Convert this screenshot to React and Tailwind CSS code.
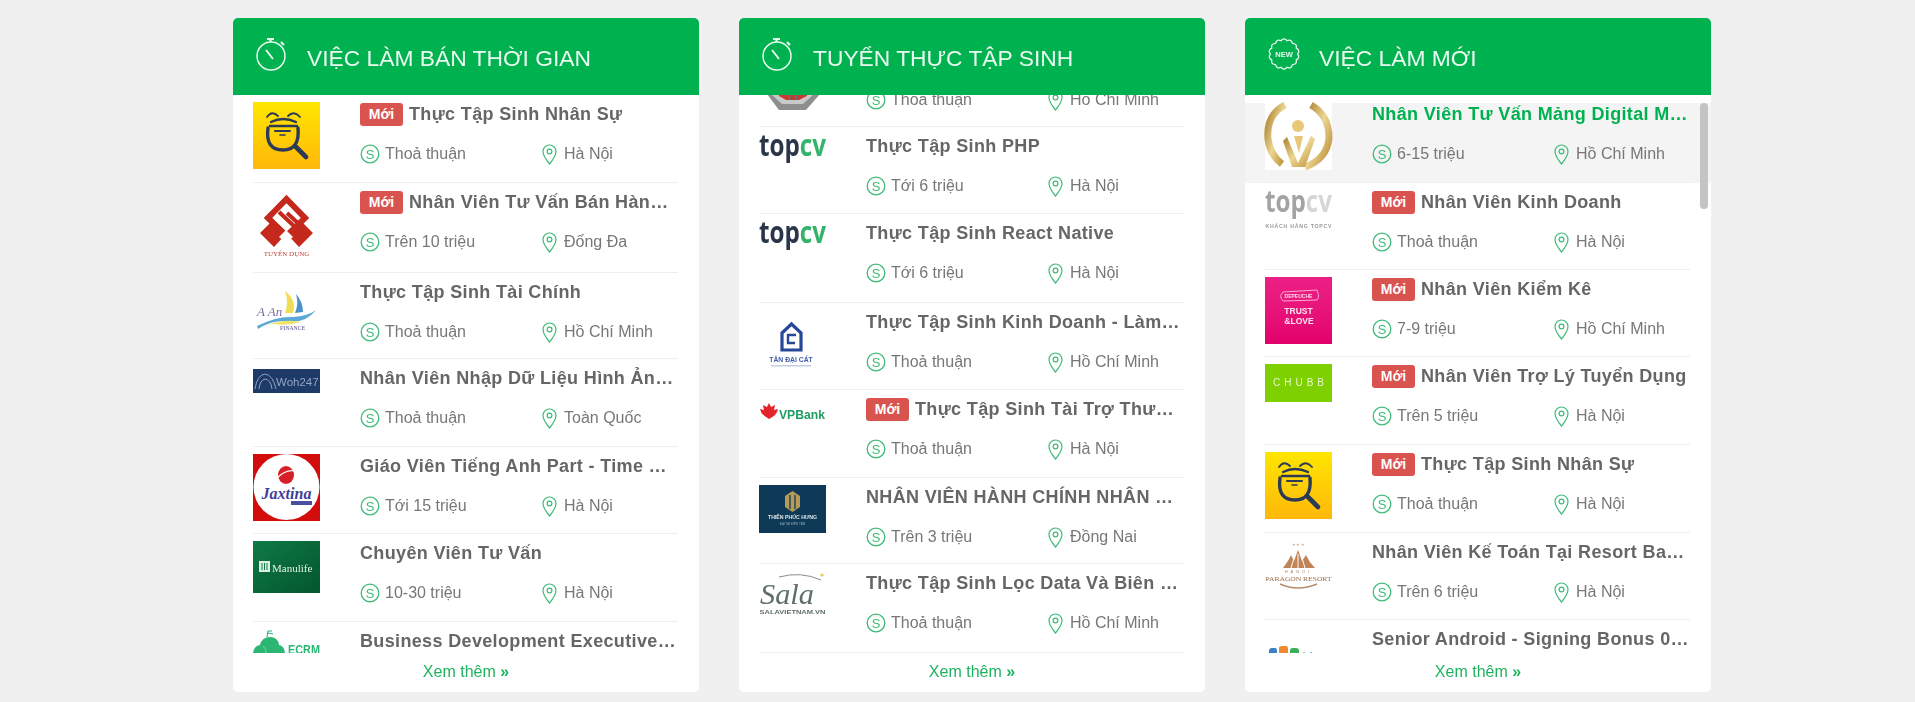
import React from "react";

const NAVY = "#2b3a55";

function Svg({ children, h = 67 }) {
  return (
    <svg width="67" height={h} viewBox={`0 0 67 ${h}`} className="block overflow-visible" style={{ fontFamily: "'Liberation Sans', sans-serif" }}>
      {children}
    </svg>
  );
}

function Bee() {
  return (
    <Svg>
      <defs>
        <linearGradient id="beeg" x1="0" y1="0" x2="0" y2="1">
          <stop offset="0" stopColor="#ffe600" />
          <stop offset="1" stopColor="#ffb70a" />
        </linearGradient>
      </defs>
      <rect width="67" height="67" fill="url(#beeg)" />
      <g fill="none" stroke={NAVY} strokeLinecap="round">
        <path d="M14 15 Q19 8 25 14" strokeWidth="1.8" />
        <path d="M47 15 Q41 8 35 14" strokeWidth="1.8" />
        <path d="M18 20 Q30 14 43 20" strokeWidth="2.4" />
        <path d="M17 24 H44" strokeWidth="2.4" />
        <path d="M22 29 H37" strokeWidth="2" />
        <path d="M27 33 H32" strokeWidth="1.6" />
        <path d="M15 26 Q12 48 30 48 Q47 48 45 26" strokeWidth="3.4" />
        <path d="M43 45 L53 55" strokeWidth="4.6" />
      </g>
    </Svg>
  );
}

function TuyenDung() {
  return (
    <Svg>
      <g fill="none" stroke="#c5281c" strokeWidth="6">
        <path d="M33.5 9 L52 28 L33.5 46 L15 28 Z" />
        <path d="M26 22 L42 37 M24 36 L33 45 M34 23 L47 35" strokeWidth="4" />
      </g>
      <path d="M7 43 L20 30 L33 44 L21 57 Z M60 43 L47 30 L34 44 L46 57 Z" fill="#c5281c" />
      <path d="M26 47 L33 40 L40 47 L33 53 Z" fill="#fff" />
      <text x="33.5" y="66" fontSize="7" textAnchor="middle" fill="#b8433c" fontFamily="'Liberation Serif', serif">TUYỂN DỤNG</text>
    </Svg>
  );
}

function AAn() {
  return (
    <Svg>
      <path d="M32 11 Q44 20 40 33 L32 33 Q36 22 32 11Z" fill="#f0dc55" />
      <path d="M43 14 Q50 22 50 32 L42 33 Q46 24 43 14Z" fill="#4a92c9" />
      <path d="M4 46 Q24 36 40 37 Q55 36 63 30 Q52 44 34 41 Q18 40 5 49Z" fill="#5aa8d8" />
      <path d="M12 46 Q30 38 48 42 Q36 46 20 44Z" fill="#efe26a" />
      <text x="4" y="36" fontSize="13" fontStyle="italic" fill="#7d6aa5" fontFamily="'Liberation Serif', serif">A An</text>
      <text x="27" y="50" fontSize="5.5" fontWeight="700" fill="#7f7aa6" fontFamily="'Liberation Serif', serif">FINANCE</text>
    </Svg>
  );
}

function Woh() {
  return (
    <div className="w-[67px] h-[24px] mt-[3px] bg-[#1d3a68] flex items-center overflow-hidden">
      <Svg h={24}>
        <path d="M2 20 Q4 6 12 5 Q20 6 23 20" fill="none" stroke="#8fa3c2" strokeWidth="1" />
        <path d="M6 20 Q7 11 12 10 Q18 11 19 20" fill="none" stroke="#8fa3c2" strokeWidth="1" />
        <text x="23" y="16.5" fontSize="11.5" fill="#93a6c4">Woh247</text>
      </Svg>
    </div>
  );
}

function Jaxtina() {
  return (
    <Svg>
      <rect width="67" height="67" fill="#d30d0d" />
      <circle cx="33.5" cy="33" r="33" fill="#fff" />
      <path d="M0 58 Q12 66 33 66 Q54 66 67 58 V67 H0Z" fill="#d30d0d" />
      <ellipse cx="33" cy="21" rx="8" ry="9" fill="#d61f26" />
      <path d="M24 24 Q33 15 42 17" stroke="#fff" strokeWidth="1.2" fill="none" />
      <text x="33.5" y="45" fontSize="16" fontWeight="700" fontStyle="italic" textAnchor="middle" fill="#3c3f98" fontFamily="'Liberation Serif', serif">Jaxtina</text>
      <rect x="38" y="47" width="21" height="4" fill="#4a4fa3" />
    </Svg>
  );
}

function Manulife() {
  return (
    <div className="w-[67px] h-[52px] bg-gradient-to-br from-[#0d7a45] to-[#05562f] flex items-center overflow-hidden">
      <Svg h={52}>
        <rect x="6" y="20" width="11" height="11" fill="#dfeee4" />
        <path d="M9 22 V29 M11.5 22 V29 M14 22 V29" stroke="#0d7a45" strokeWidth="1" />
        <text x="19" y="31" fontSize="11" fill="#e6f2ea" fontFamily="'Liberation Serif', serif">Manulife</text>
      </Svg>
    </div>
  );
}

function Ecrm() {
  return (
    <Svg>
      <path d="M0 26 Q0 17 7 16 Q9 8 17 8 Q25 8 26 16 Q32 17 32 26 Z" fill="#2bb673" />
      <path d="M14 8 L15 2 M15 2 L19 2 M15 4 L20 5" stroke="#2bb673" strokeWidth="1.2" fill="none" />
      <path d="M10 17 Q14 20 13 25" stroke="#8fdcb5" strokeWidth="0.8" fill="none" />
      <text x="35" y="24.5" fontSize="13" fontWeight="700" fill="#2bb673" textLength="32" lengthAdjust="spacingAndGlyphs">ECRM</text>
    </Svg>
  );
}

function Seal() {
  return (
    <Svg>
      <path d="M20 0 H47 L61 16 V46 L47 62 H20 L8 46 V16 Z" fill="#8e8e8e" />
      <path d="M15 6 H52 L55 46 L44 56 H23 L12 46 Z" fill="#c9c9c9" />
      <path d="M18 28 H50 L48 48 L40 52 H27 L20 48 Z" fill="#c73a32" />
      <path d="M31 28 V52 M37 28 V52" stroke="#6a6a6a" strokeWidth="2" />
    </Svg>
  );
}

function TopCv({ gray }) {
  return (
    <Svg>
      <text x="0" y="22" fontSize="30" fontWeight="700" textLength="67" lengthAdjust="spacingAndGlyphs" style={{ fontFamily: "'Open Sans', sans-serif" }}>
        <tspan fill={gray ? "#a3a3a3" : "#2a3648"}>top</tspan>
        <tspan fill={gray ? "#d6d6d6" : "#34b36b"}>cv</tspan>
      </text>
      {gray && (
        <text x="33.5" y="38" fontSize="5.2" fontWeight="700" textAnchor="middle" fill="#9a9a9a" textLength="66" lengthAdjust="spacing">KHÁCH HÀNG TOPCV</text>
      )}
    </Svg>
  );
}

function TanDaiCat() {
  return (
    <Svg>
      <path d="M32.5 14 L42 23 V40 H23 V23 Z" fill="none" stroke="#27479b" strokeWidth="3.2" />
      <path d="M36 33 H29 V25 H37" fill="none" stroke="#27479b" strokeWidth="2.4" />
      <text x="32" y="52" fontSize="6.8" fontWeight="700" textAnchor="middle" fill="#3d5ba8">TÂN ĐẠI CÁT</text>
      <rect x="12" y="55" width="40" height="1.5" fill="#c5cde0" />
    </Svg>
  );
}

function VPBank() {
  return (
    <Svg>
      <path d="M10 22 Q2 18 1 12 L5 13 L4 8 L8 10 L10 6 L12 10 L16 8 L15 13 L19 12 Q18 18 10 22Z" fill="#e3242b" />
      <text x="20" y="22" fontSize="13.5" fontWeight="700" fill="#1e9c62" textLength="46" lengthAdjust="spacingAndGlyphs">VPBank</text>
    </Svg>
  );
}

function ThienPhuc() {
  return (
    <div className="w-[67px] h-[48px] bg-[#0e3a57]">
      <Svg h={48}>
        <path d="M33.5 6 L41 11 V22 L33.5 27 L26 22 V11 Z" fill="#b79a55" />
        <path d="M31 10 V24 M36 10 V24" stroke="#0e3a57" strokeWidth="1.3" />
        <text x="33.5" y="34" fontSize="5.2" fontWeight="700" textAnchor="middle" fill="#dfe5e6">THIÊN PHÚC HƯNG</text>
        <text x="33.5" y="40" fontSize="3" textAnchor="middle" fill="#94a7b3">ĐẠI TÀI ĐIỀN TÂM</text>
      </Svg>
    </div>
  );
}

function Sala() {
  return (
    <Svg>
      <path d="M20 6 Q42 0 62 9" fill="none" stroke="#8a8a8a" strokeWidth="1" />
      <circle cx="63" cy="4" r="1.6" fill="#e9c65a" />
      <text x="1" y="33" fontSize="30" fontStyle="italic" fill="#5d6f68" textLength="54" lengthAdjust="spacingAndGlyphs" fontFamily="'Liberation Serif', serif">Sala</text>
      <text x="33.5" y="43" fontSize="5.4" fontWeight="700" textAnchor="middle" fill="#5f6d68" textLength="66" lengthAdjust="spacingAndGlyphs">SALAVIETNAM.VN</text>
    </Svg>
  );
}

function Gold() {
  return (
    <div className="bg-white w-[67px] h-[67px]">
      <Svg>
        <defs>
          <linearGradient id="goldg" x1="0" y1="0" x2="1" y2="1">
            <stop offset="0" stopColor="#a87c2c" />
            <stop offset=".5" stopColor="#ecd792" />
            <stop offset="1" stopColor="#b98b35" />
          </linearGradient>
        </defs>
        <path d="M20 2 Q1 12 3 36 Q5 52 17 61" fill="none" stroke="url(#goldg)" strokeWidth="7" />
        <path d="M46 2 Q64 12 64 35 Q62 56 40 64" fill="none" stroke="url(#goldg)" strokeWidth="7" />
        <circle cx="33" cy="23" r="6" fill="#e8c878" />
        <path d="M22 34 L33 60 L46 33 L50 36 L40 64 H27 L18 38 Z" fill="url(#goldg)" />
        <path d="M29 33 H38 L34 50 Z" fill="#e8c878" />
      </Svg>
    </div>
  );
}

function Trust() {
  return (
    <div className="w-[67px] h-[67px] bg-gradient-to-b from-[#ed1f85] to-[#e2006c]">
      <Svg>
        <path d="M16 21 Q14 19 18 15 L52 13 Q55 20 52 23 L18 24 Z" fill="none" stroke="#f7a8cf" strokeWidth="1" />
        <text x="33.5" y="21" fontSize="5" textAnchor="middle" fontWeight="700" fill="#ffd9ea">DEPEUCHE</text>
        <text x="33.5" y="37" fontSize="8.5" fontWeight="700" textAnchor="middle" fill="#ffe3f0">TRUST</text>
        <text x="34" y="47" fontSize="8.5" fontWeight="700" textAnchor="middle" fill="#ffe3f0">&amp;LOVE</text>
      </Svg>
    </div>
  );
}

function Chubb() {
  return (
    <div className="w-[67px] h-[38px] bg-[#7ed000] flex items-center justify-center">
      <span className="text-[10px] leading-none text-[#e9f7cf] tracking-[4px] pl-[4px] font-['Liberation_Sans',sans-serif]">CHUBB</span>
    </div>
  );
}

function Paragon() {
  return (
    <Svg>
      <path d="M18 28 Q24 20 26 15 L29 21 L33 10 L37 21 L41 15 Q44 22 50 28 Z" fill="#c08457" />
      <path d="M26 28 L29 18 M33 28 V14 M40 28 L37 18" stroke="#fff" strokeWidth="1" />
      <text x="33.5" y="6" fontSize="3.5" textAnchor="middle" fill="#c9a98b">★ ★ ★</text>
      <text x="33.5" y="33" fontSize="4" textAnchor="middle" letterSpacing="3" fill="#a98460">HANOI</text>
      <text x="33.5" y="41" fontSize="7" textAnchor="middle" fill="#9c6c45" textLength="66" lengthAdjust="spacingAndGlyphs" fontFamily="'Liberation Serif', serif">PARAGON RESORT</text>
      <path d="M15 44 Q33 52 52 44" fill="none" stroke="#b68d68" strokeWidth="1.5" />
    </Svg>
  );
}

function Fpt() {
  return (
    <Svg>
      <path d="M4 30 V24 Q4 21 7 21 H10 Q12 21 12 24 V30Z" fill="#3b7fc4" />
      <path d="M14 30 V21 Q14 19 17 19 H21 Q23 19 23 22 V30Z" fill="#ef8a2e" />
      <path d="M25 30 V23 Q25 21 28 21 H31 Q34 21 34 24 V30Z" fill="#3fae5a" />
      <circle cx="39" cy="26" r="1" fill="#6f9bd1" />
      <circle cx="46" cy="26" r="1" fill="#6f9bd1" />
    </Svg>
  );
}

function Dollar() {
  return (
    <svg width="20" height="20" viewBox="0 0 20 20" className="shrink-0">
      <circle cx="10" cy="10" r="8.8" fill="none" stroke="#3fbb78" strokeWidth="1.3" />
      <text x="10" y="14.6" fontSize="13" textAnchor="middle" fill="#3fbb78" style={{ fontFamily: "'Liberation Sans', sans-serif" }}>S</text>
    </svg>
  );
}

function Pin() {
  return (
    <svg width="15" height="21" viewBox="0 0 15 21" className="shrink-0">
      <path d="M7.5 20 Q1 12 1 7.5 A6.5 6.5 0 0 1 14 7.5 Q14 12 7.5 20Z" fill="none" stroke="#3fbb78" strokeWidth="1.2" />
      <circle cx="7.5" cy="7.5" r="2.4" fill="none" stroke="#3fbb78" strokeWidth="1.2" />
    </svg>
  );
}

function Clock() {
  return (
    <svg width="31" height="34" viewBox="0 0 31 34" className="shrink-0" fill="none" stroke="#e4f8ec" strokeWidth="1.5">
      <circle cx="15" cy="19" r="14" />
      <path d="M10 13 L17 22" strokeWidth="2" />
      <path d="M11 2 H18 M14.5 2 V5" strokeWidth="2.2" />
      <path d="M25 5 L28 8" strokeWidth="2.2" />
    </svg>
  );
}

function NewBadge() {
  const n = 14;
  let d = "";
  for (let i = 0; i < n; i++) {
    const a0 = (i / n) * Math.PI * 2;
    const a1 = ((i + 0.5) / n) * Math.PI * 2;
    const a2 = ((i + 1) / n) * Math.PI * 2;
    const p = (a, r) => `${(16 + r * Math.cos(a)).toFixed(2)} ${(16 + r * Math.sin(a)).toFixed(2)}`;
    d += `${i === 0 ? "M" + p(a0, 13.6) : ""} Q${p(a1, 16.8)} ${p(a2, 13.6)} `;
  }
  return (
    <svg width="32" height="32" viewBox="0 0 32 32" className="shrink-0">
      <path d={d + "Z"} fill="none" stroke="#e4f8ec" strokeWidth="1.3" />
      <text x="16" y="19" fontSize="7.5" fontWeight="700" textAnchor="middle" fill="#e4f8ec" style={{ fontFamily: "'Liberation Sans', sans-serif" }}>NEW</text>
    </svg>
  );
}

function Row({ logo, title, isNew, pay, place, h, active, noTitle }) {
  return (
    <div className={`${h} pl-[20px] ${active ? "bg-[#f4f4f4]" : ""} box-border`}>
      <div className={`flex w-[425px] h-full box-border border-b border-[#eeeeee] ${active ? "" : "pt-[7px]"}`}>
        <div className="w-[107px] shrink-0">{logo}</div>
        <div className="w-[318px] min-w-0">
          <div className={`flex items-center h-[24px] gap-[6px] ${active ? "-mt-[1px]" : ""}`}>
            {isNew && (
              <span className="shrink-0 w-[43px] h-[23px] rounded-[3px] bg-[#d9534f] text-white text-[14px] leading-[23px] font-bold text-center">Mới</span>
            )}
            {!noTitle && (
              <span className={`truncate text-[18px] leading-[24px] font-bold tracking-[0.35px] pr-[1px] ${active ? "text-[#00b14f]" : "text-[#666666]"}`}>{title}</span>
            )}
          </div>
          {pay && (
            <div className="flex items-center h-[24px] mt-[16px] text-[16px] text-[#777777]">
              <div className="flex items-center gap-[5px] w-[182px]">
                <Dollar />
                <span>{pay}</span>
              </div>
              <div className="flex items-center gap-[7px]">
                <Pin />
                <span>{place}</span>
              </div>
            </div>
          )}
        </div>
      </div>
    </div>
  );
}

function Card({ icon, title, rows, offset, pad, scrollbar }) {
  return (
    <div className="w-[466px] h-[674px] bg-white rounded-[5px] flex flex-col overflow-hidden relative">
      <div className="h-[77px] shrink-0 bg-[#00b14f] flex items-center pl-[23px] gap-[20px] text-[#eafaf0] text-[22.8px] leading-none">
        <div className="w-[31px] flex justify-center -mt-[6px]">{icon}</div>
        <span className="mt-[4px]">{title}</span>
      </div>
      <div className={`h-[558px] overflow-hidden box-border ${pad || ""}`}>
        <div className={offset || ""}>
          {rows.map((r, i) => (
            <Row key={i} {...r} />
          ))}
        </div>
      </div>
      <div className="flex-1 flex items-center justify-center text-[16px] text-[#1fb35f] -mt-[2px]">
        Xem thêm&nbsp;<span className="text-[16px] leading-none font-bold">»</span>
      </div>
      {scrollbar && <div className="absolute left-[455px] top-[85px] w-[8px] h-[106px] rounded-[4px] bg-[#c4c4c4]" />}
    </div>
  );
}

const col1 = [
  { logo: <Bee />, title: "Thực Tập Sinh Nhân Sự", isNew: true, pay: "Thoả thuận", place: "Hà Nội", h: "h-[88px]" },
  { logo: <TuyenDung />, title: "Nhân Viên Tư Vấn Bán Hàng Online", isNew: true, pay: "Trên 10 triệu", place: "Đống Đa", h: "h-[90px]" },
  { logo: <AAn />, title: "Thực Tập Sinh Tài Chính", pay: "Thoả thuận", place: "Hồ Chí Minh", h: "h-[86px]" },
  { logo: <Woh />, title: "Nhân Viên Nhập Dữ Liệu Hình Ảnh Tại Nhà", pay: "Thoả thuận", place: "Toàn Quốc", h: "h-[88px]" },
  { logo: <Jaxtina />, title: "Giáo Viên Tiếng Anh Part - Time Tại Hà Nội", pay: "Tới 15 triệu", place: "Hà Nội", h: "h-[87px]" },
  { logo: <Manulife />, title: "Chuyên Viên Tư Vấn", pay: "10-30 triệu", place: "Hà Nội", h: "h-[88px]" },
  { logo: <Ecrm />, title: "Business Development Executive Part Time", h: "h-[88px]" },
];

const col2 = [
  { logo: <Seal />, noTitle: true, pay: "Thoả thuận", place: "Hồ Chí Minh", h: "h-[86px]" },
  { logo: <TopCv />, title: "Thực Tập Sinh PHP", pay: "Tới 6 triệu", place: "Hà Nội", h: "h-[87px]" },
  { logo: <TopCv />, title: "Thực Tập Sinh React Native", pay: "Tới 6 triệu", place: "Hà Nội", h: "h-[89px]" },
  { logo: <TanDaiCat />, title: "Thực Tập Sinh Kinh Doanh - Làm Việc Tại Quận 7", pay: "Thoả thuận", place: "Hồ Chí Minh", h: "h-[87px]" },
  { logo: <VPBank />, title: "Thực Tập Sinh Tài Trợ Thương Mại", isNew: true, pay: "Thoả thuận", place: "Hà Nội", h: "h-[88px]" },
  { logo: <ThienPhuc />, title: "NHÂN VIÊN HÀNH CHÍNH NHÂN SỰ TẠI ĐỒNG NAI", pay: "Trên 3 triệu", place: "Đồng Nai", h: "h-[86px]" },
  { logo: <Sala />, title: "Thực Tập Sinh Lọc Data Và Biên Tập Nội Dung", pay: "Thoả thuận", place: "Hồ Chí Minh", h: "h-[89px]" },
];

const col3 = [
  { logo: <Gold />, title: "Nhân Viên Tư Vấn Mảng Digital Marketing", pay: "6-15 triệu", place: "Hồ Chí Minh", h: "h-[80px]", active: true },
  { logo: <TopCv gray />, title: "Nhân Viên Kinh Doanh", isNew: true, pay: "Thoả thuận", place: "Hà Nội", h: "h-[87px]" },
  { logo: <Trust />, title: "Nhân Viên Kiểm Kê", isNew: true, pay: "7-9 triệu", place: "Hồ Chí Minh", h: "h-[87px]" },
  { logo: <Chubb />, title: "Nhân Viên Trợ Lý Tuyển Dụng", isNew: true, pay: "Trên 5 triệu", place: "Hà Nội", h: "h-[88px]" },
  { logo: <Bee />, title: "Thực Tập Sinh Nhân Sự", isNew: true, pay: "Thoả thuận", place: "Hà Nội", h: "h-[88px]" },
  { logo: <Paragon />, title: "Nhân Viên Kế Toán Tại Resort Ba Vì Hà Nội", pay: "Trên 6 triệu", place: "Hà Nội", h: "h-[87px]" },
  { logo: <Fpt />, title: "Senior Android - Signing Bonus 01 Tháng Lương", h: "h-[88px]" },
];

export default function App() {
  return (
    <div className="min-h-screen bg-[#f0f0f0] font-['Liberation_Sans',Arial,sans-serif] overflow-hidden">
      <div className="flex gap-[40px] pl-[233px] pt-[18px] h-[702px] blur-[0.5px]">
        <Card icon={<Clock />} title="VIỆC LÀM BÁN THỜI GIAN" rows={col1} />
        <Card icon={<Clock />} title="TUYỂN THỰC TẬP SINH" rows={col2} offset="-mt-[54px]" />
        <Card icon={<NewBadge />} title="VIỆC LÀM MỚI" rows={col3} pad="pt-[8px]" scrollbar />
      </div>
    </div>
  );
}
